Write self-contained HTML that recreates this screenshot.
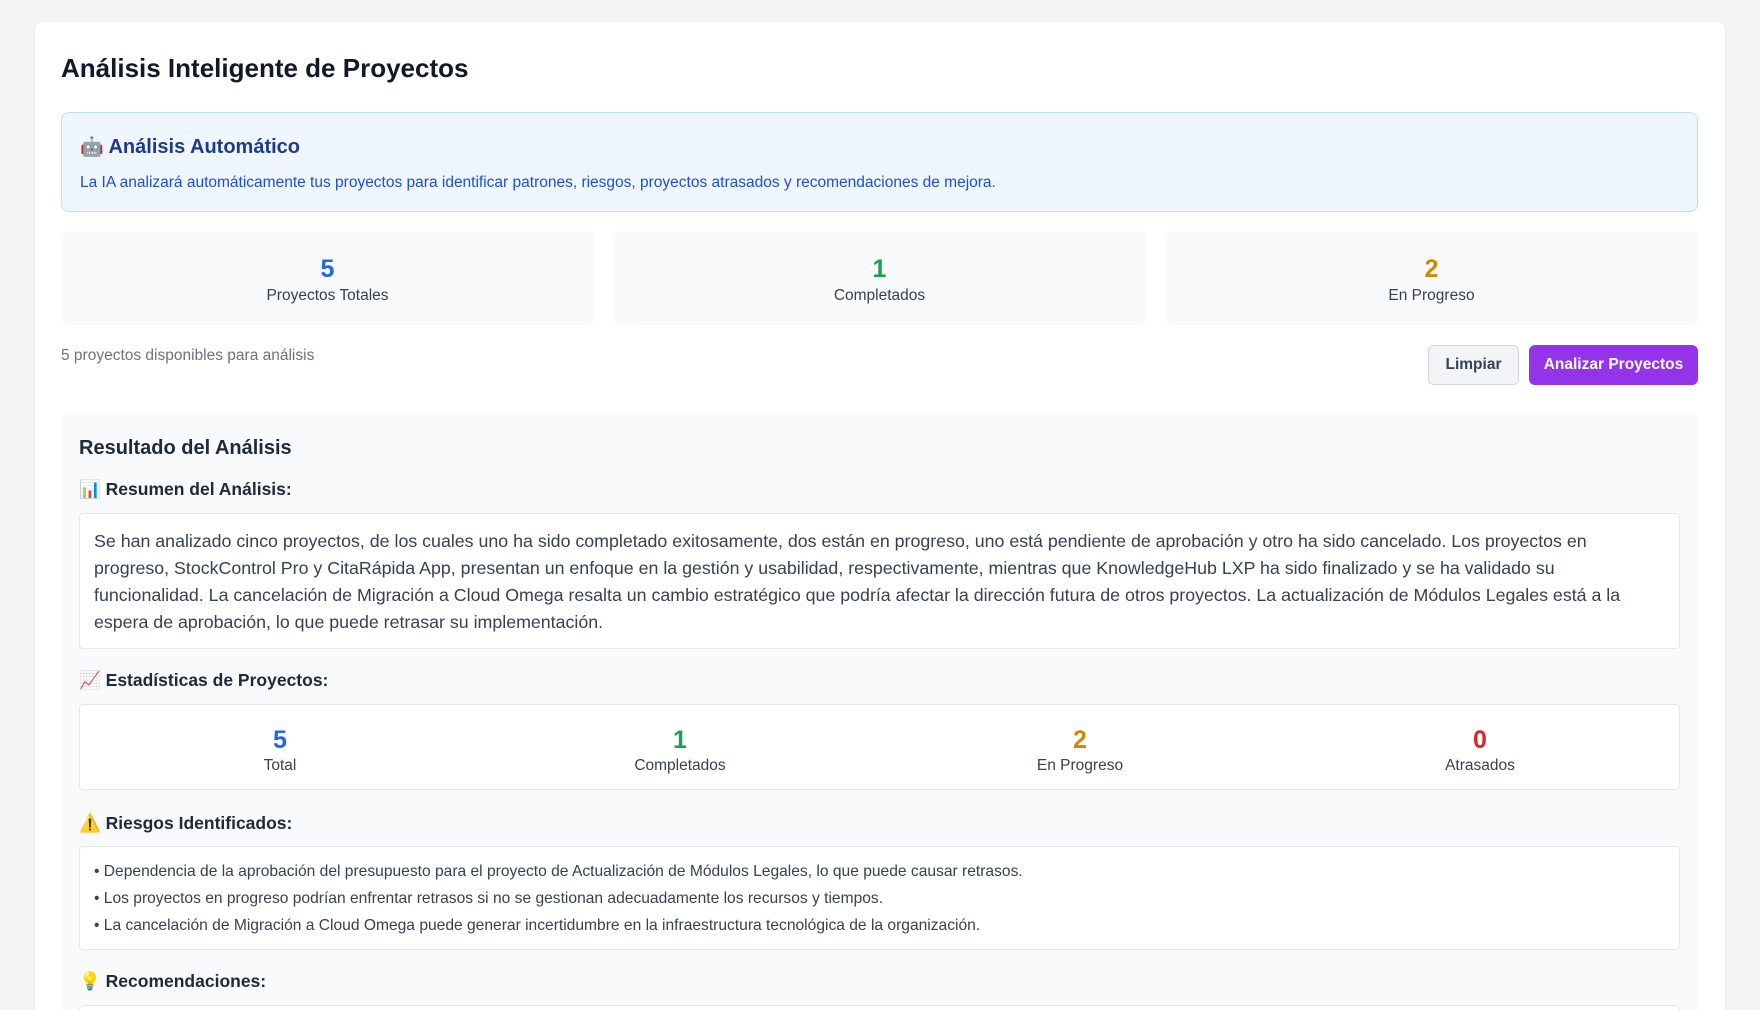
<!DOCTYPE html>
<html style="height:1010px;overflow:hidden"><head><meta charset="utf-8"><style>
*{box-sizing:border-box;margin:0;padding:0}
body{width:1760px;height:1010px;background:#f3f4f6;font-family:"Liberation Sans",sans-serif;color:#1f2937;overflow:hidden;position:relative}
.a{position:absolute}
.card{left:35px;top:22px;width:1690px;height:988px;background:#fff;border-radius:8px 8px 0 0;box-shadow:0 1px 3px rgba(0,0,0,.08)}
h1{position:absolute;left:61px;top:53px;font-size:26px;font-weight:bold;color:#111827}
.info{left:61px;top:112px;width:1637px;height:100px;background:#eff6ff;border:1px solid #bfdbfe;border-radius:8px}
.stat{top:231px;width:533px;height:94px;background:#f8fafc;border-radius:8px;text-align:center}
.stat .n{font-size:25px;font-weight:bold;margin-top:23px;line-height:30px}
.stat .l{font-size:15.5px;color:#374151;margin-top:3px}
.btn{top:345px;height:40px;border-radius:6px;font-size:15.5px;font-weight:bold;display:flex;align-items:center;justify-content:center}
.panel{left:61px;top:413px;width:1637px;height:597px;background:#f8fafc;border-radius:8px 8px 0 0}
.sh{font-size:17.5px;font-weight:bold;color:#1f2937;left:79px}
.box{left:79px;width:1601px;background:#fff;border:1px solid #e5e7eb;border-radius:4px}
.blue{color:#2563eb}.green{color:#16a34a}.amber{color:#ca8a04}.red{color:#dc2626}
.col{position:absolute;top:0;width:400px;text-align:center}
.col .n{font-size:25px;font-weight:bold;margin-top:20px;line-height:30px}
.col .l{font-size:15.5px;color:#374151;margin-top:2px}
.risk{font-size:15.6px;color:#374151;line-height:27px;padding:11px 0 0 14px;white-space:nowrap}
</style></head><body>
<div class="a card"></div>
<h1>Análisis Inteligente de Proyectos</h1>
<div class="a info">
 <div class="a" style="left:18px;top:22px;font-size:20px;font-weight:bold;color:#1e3a8a;white-space:nowrap"><span style="font-size:19px">🤖</span> Análisis Automático</div>
 <div class="a" style="left:18px;top:61px;font-size:15.5px;color:#1d4ed8;white-space:nowrap">La IA analizará automáticamente tus proyectos para identificar patrones, riesgos, proyectos atrasados y recomendaciones de mejora.</div>
</div>
<div class="a stat" style="left:61px"><div class="n blue">5</div><div class="l">Proyectos Totales</div></div>
<div class="a stat" style="left:613px"><div class="n green">1</div><div class="l">Completados</div></div>
<div class="a stat" style="left:1165px"><div class="n amber">2</div><div class="l">En Progreso</div></div>
<div class="a" style="left:61px;top:347px;font-size:15.5px;color:#6b7280">5 proyectos disponibles para análisis</div>
<div class="a btn" style="left:1428px;width:91px;background:#f3f4f6;border:1px solid #d1d5db;color:#374151">Limpiar</div>
<div class="a btn" style="left:1529px;width:169px;background:#9333ea;color:#fff">Analizar Proyectos</div>
<div class="a panel"></div>
<div class="a" style="left:79px;top:437px;font-size:20px;font-weight:bold;color:#1f2937">Resultado del Análisis</div>
<div class="a sh" style="top:479px">📊 Resumen del Análisis:</div>
<div class="a box" style="top:513px;height:136px;padding:14px 0 0 14px;font-size:17.8px;line-height:27px;color:#374151;white-space:nowrap">Se han analizado cinco proyectos, de los cuales uno ha sido completado exitosamente, dos están en progreso, uno está pendiente de aprobación y otro ha sido cancelado. Los proyectos en<br>progreso, StockControl Pro y CitaRápida App, presentan un enfoque en la gestión y usabilidad, respectivamente, mientras que KnowledgeHub LXP ha sido finalizado y se ha validado su<br>funcionalidad. La cancelación de Migración a Cloud Omega resalta un cambio estratégico que podría afectar la dirección futura de otros proyectos. La actualización de Módulos Legales está a la<br>espera de aprobación, lo que puede retrasar su implementación.</div>
<div class="a sh" style="top:670px">📈 Estadísticas de Proyectos:</div>
<div class="a box" style="top:704px;height:86px">
 <div class="col" style="left:0"><div class="n blue">5</div><div class="l">Total</div></div>
 <div class="col" style="left:400px"><div class="n green">1</div><div class="l">Completados</div></div>
 <div class="col" style="left:800px"><div class="n amber">2</div><div class="l">En Progreso</div></div>
 <div class="col" style="left:1200px"><div class="n red">0</div><div class="l">Atrasados</div></div>
</div>
<div class="a sh" style="top:813px">⚠️ Riesgos Identificados:</div>
<div class="a box risk" style="top:846px;height:104px">• Dependencia de la aprobación del presupuesto para el proyecto de Actualización de Módulos Legales, lo que puede causar retrasos.<br>• Los proyectos en progreso podrían enfrentar retrasos si no se gestionan adecuadamente los recursos y tiempos.<br>• La cancelación de Migración a Cloud Omega puede generar incertidumbre en la infraestructura tecnológica de la organización.</div>
<div class="a sh" style="top:971px">💡 Recomendaciones:</div>
<div class="a box" style="top:1005px;height:5px;border-bottom:none;border-radius:4px 4px 0 0"></div>
</body></html>
